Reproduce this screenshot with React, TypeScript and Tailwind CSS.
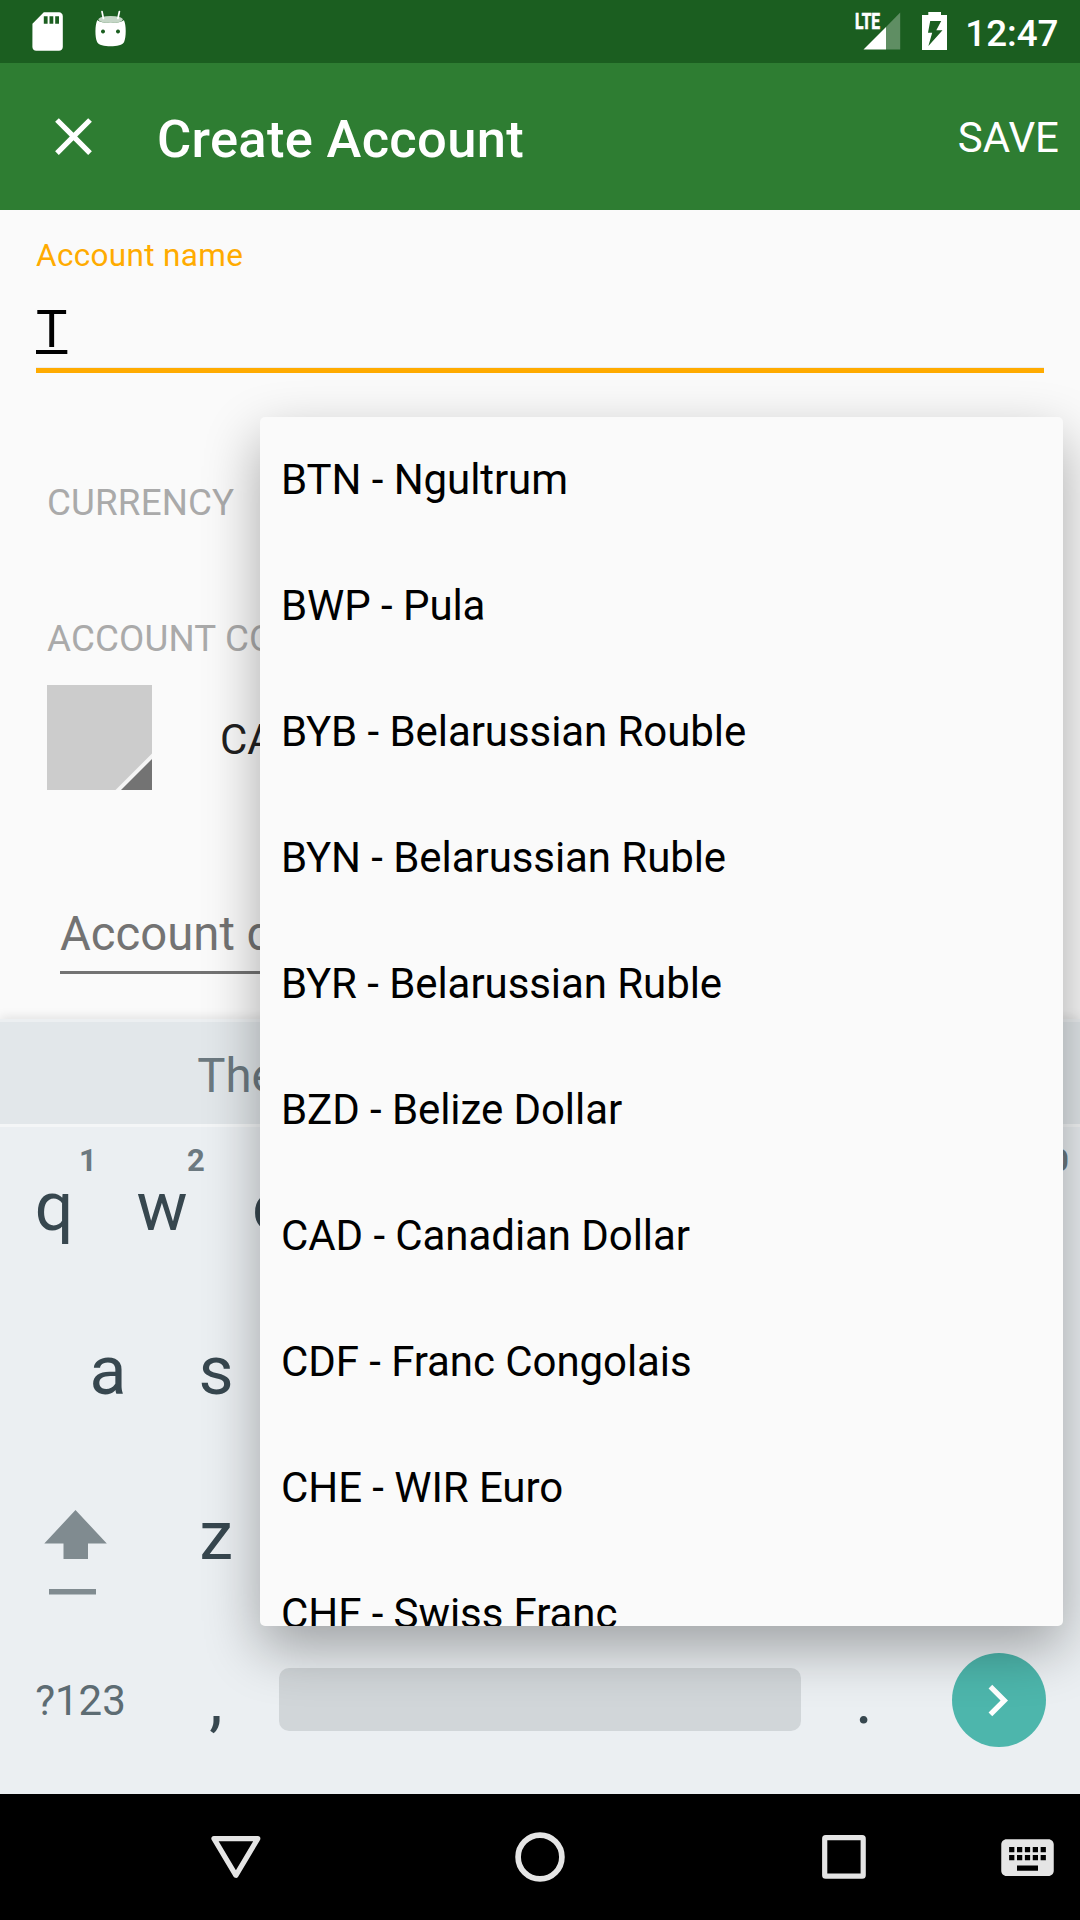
import React from "react";

const currencies = [
  "BTN - Ngultrum",
  "BWP - Pula",
  "BYB - Belarussian Rouble",
  "BYN - Belarussian Ruble",
  "BYR - Belarussian Ruble",
  "BZD - Belize Dollar",
  "CAD - Canadian Dollar",
  "CDF - Franc Congolais",
  "CHE - WIR Euro",
  "CHF - Swiss Franc",
];

const topRow = ["q", "w", "e", "r", "t", "y", "u", "i", "o", "p"];
const homeRow = ["a", "s", "d", "f", "g", "h", "j", "k", "l"];
const bottomRow = ["z", "x", "c", "v", "b", "n", "m"];

function StatusBar() {
  return (
    <div className="flex h-[63px] justify-between bg-[#1b5e20] text-white">
      <svg width="140" height="63" viewBox="0 0 140 63" fill="currentColor">
        <path
          transform="translate(24.8 8.5) scale(1.9 1.92)"
          d="M18 2h-8L4.02 8 4 20c0 1.1.9 2 2 2h12c1.1 0 2-.9 2-2V4c0-1.1-.9-2-2-2zm-6 6h-2V4h2v4zm3 0h-2V4h2v4zm3 0h-2V4h2v4z"
        />
        <path d="M102 11.5l1.4 7M119.4 11.5l-1.5 7" stroke="currentColor" strokeWidth="1.7" strokeLinecap="round" />
        <ellipse cx="110.6" cy="19.5" rx="12.2" ry="3.5" opacity="0.75" />
        <path
          fillRule="evenodd"
          d="M97.3 20c3 4 23.600 4 26.600 0 2.400 5 2.400 17 .2 22-2.500 5.800-24.500 5.800-27 0-2.200-5-2.200-17 .2-22zM103 29.400a2 2 0 1 0 .01 0zM118 29.400a2 2 0 1 0 .01 0z"
        />
      </svg>
      <div className="flex">
        <svg width="110" height="63" viewBox="850 0 110 63" fill="currentColor">
          <text x="855" y="29.300" fontFamily="Roboto" fontWeight="700" fontSize="22.500" stroke="currentColor" strokeWidth="0.7" textLength="25" lengthAdjust="spacingAndGlyphs">
            LTE
          </text>
          <path d="M900.200 12.600V49.500H886V27z" opacity="0.3" />
          <path d="M886 27V49.500H863.500z" />
          <path
            fillRule="evenodd"
            d="M928.300 12h12.700v3h6v35h-25V15h6.300zM930.200 21l-2.200 11.700h4.200L928.400 46l14.100-15.700h-6.200L941.200 21z"
          />
        </svg>
        <span className="mt-[15px] mr-[21.500px] ml-[5px] text-[36.750px] leading-[37px] font-medium">12:47</span>
      </div>
    </div>
  );
}

function AppBar() {
  return (
    <header className="flex h-[147px] items-center bg-[#2e7d32] pr-[21px] pl-[42px] text-white">
      <svg width="63" height="63" viewBox="0 0 24 24" fill="currentColor">
        <path d="M19 6.410L17.590 5 12 10.590 6.410 5 5 6.410 10.590 12 5 17.590 6.410 19 12 13.410 17.590 19 19 17.590 13.410 12z" />
      </svg>
      <h1 className="mt-[4px] ml-[52px] flex-1 text-[52.500px] leading-[60px] font-medium tracking-[0.300px]">Create Account</h1>
      <button className="mt-[2px] text-[42px] leading-[48px]">SAVE</button>
    </header>
  );
}

function AccountForm() {
  return (
    <main className="flex h-[809px] flex-col bg-[#fafafa] px-[36px] pt-[28px] whitespace-nowrap">
      <label className="text-[31.500px] leading-[36px] tracking-[0.330px] text-[#ffab00]">Account name</label>
      <div className="mt-[25px] text-[52.500px] leading-[60px] text-black">
        <span className="underline decoration-[3.500px] underline-offset-[3px]">T</span>
      </div>
      <div className="mt-[8px] h-[6px] border-t border-[#ececec] bg-[#ffab00]" />
      <div className="mt-[108px] ml-[11px] text-[36.750px] leading-[44px] tracking-[0.150px] text-[#aaaaaa]">CURRENCY</div>
      <div className="mt-[92px] ml-[11px] text-[36.750px] leading-[44px] tracking-[0.150px] text-[#aaaaaa]">ACCOUNT COLOR</div>
      <div className="mt-[24px] ml-[11px] flex h-[105px] items-center">
        <svg width="105" height="105" viewBox="0 0 105 105">
          <path fill="#cccccc" d="M0 0h105v105H0z" />
          <path fill="#f5f5f5" d="M105 68.500V105H68.500z" />
          <path fill="#737373" d="M105 74V105H74z" />
        </svg>
        <span className="mt-[4px] ml-[68px] text-[42px] leading-[48px] text-[#212121]">CASH</span>
      </div>
      <div className="mx-[24px] mt-[116px] text-[47.250px] leading-[56px] text-[#737373]">Account description</div>
      <div className="mx-[24px] mt-[9px] h-[3px] shrink-0 bg-[#737373]" />
    </main>
  );
}

function Key({ label }: { label: string }) {
  return <span className="w-[108px] text-center text-[68px] leading-[80px] text-[#37474f]">{label}</span>;
}

function Keyboard() {
  return (
    <section className="flex h-[775px] flex-col bg-[#ebeff2] shadow-[0_-2px_10px_rgba(0,0,0,0.10)]">
      <div className="h-[3px] bg-[#eceff1]" />
      <div className="flex h-[102px] items-center bg-[#e2e7ea] text-[47.250px] leading-[56px] text-[#6c7980]">
        <span className="mt-[5px] w-[474px] text-center">The</span>
      </div>
      <div className="h-[3px] bg-[#f4f6f7]" />
      <div className="flex h-[159px] items-center">
        {topRow.map((letter, i) => (
          <div key={letter} className="relative flex h-full items-center">
            <Key label={letter} />
            <span className="absolute top-[18px] left-[68px] w-[40px] text-center text-[31px] leading-[32px] font-bold text-[#6c7980]">
              {(i + 1) % 10}
            </span>
          </div>
        ))}
      </div>
      <div className="mt-[2px] flex h-[166px] items-center justify-center">
        {homeRow.map((letter) => (
          <Key key={letter} label={letter} />
        ))}
      </div>
      <div className="flex h-[164px] items-center">
        <svg className="shrink-0" width="162" height="164" viewBox="0 0 162 164" fill="#808b90">
          <path d="M75.500 56L106.800 89.500H88V105H63.500V89.500H44.300z" />
          <path d="M49 135h47v5.500H49z" />
        </svg>
        {bottomRow.map((letter) => (
          <Key key={letter} label={letter} />
        ))}
      </div>
      <div className="flex h-[164px] items-center">
        <span className="mt-[2px] w-[162px] pr-[1px] text-center text-[42px] leading-[48px] text-[#5d6c73]">?123</span>
        <Key label="," />
        <div className="mb-[1px] ml-[9px] h-[63px] w-[522px] rounded-[10px] bg-[#d1d6d9]" />
        <span className="ml-[9px] w-[108px] text-center text-[68px] leading-[80px] text-[#37474f]">.</span>
        <div className="ml-[34px] flex h-[94px] w-[94px] items-center justify-center rounded-full bg-[#4db6ac]">
          <svg className="mr-[3px]" width="63" height="63" viewBox="0 0 24 24" fill="white">
            <path d="M10 6L8.590 7.410 13.170 12l-4.580 4.590L10 18l6-6z" />
          </svg>
        </div>
      </div>
    </section>
  );
}

function NavigationBar() {
  return (
    <nav className="flex h-[126px] items-center bg-black text-[#e5e5e5]">
      <svg className="ml-[206px]" width="60" height="60" viewBox="0 0 60 60" fill="none" stroke="currentColor" strokeWidth="5.200" strokeLinejoin="round">
        <path d="M8 11.600H51.800L29.900 48.300z" />
      </svg>
      <svg className="ml-[244px]" width="60" height="60" viewBox="0 0 60 60" fill="none" stroke="currentColor" strokeWidth="5.700">
        <circle cx="30" cy="30" r="21.900" />
      </svg>
      <svg className="ml-[244px]" width="60" height="60" viewBox="0 0 60 60" fill="none" stroke="currentColor" strokeWidth="5.200" strokeLinejoin="round">
        <rect x="10.700" y="10.700" width="38.500" height="38.500" rx="1" />
      </svg>
      <svg className="ml-[122px]" width="63" height="63" viewBox="0 0 24 24" fill="currentColor">
        <path d="M20 5H4c-1.100 0-1.990.9-1.990 2L2 17c0 1.100.9 2 2 2h16c1.100 0 2-.9 2-2V7c0-1.100-.9-2-2-2zm-9 3h2v2h-2V8zm0 3h2v2h-2v-2zM8 8h2v2H8V8zm0 3h2v2H8v-2zm-1 2H5v-2h2v2zm0-3H5V8h2v2zm9 7H8v-2h8v2zm0-4h-2v-2h2v2zm0-3h-2V8h2v2zm3 3h-2v-2h2v2zm0-3h-2V8h2v2z" />
      </svg>
    </nav>
  );
}

function CurrencyMenu() {
  return (
    <ul className="absolute top-[417px] left-[260px] h-[1209px] w-[803px] overflow-hidden rounded-[5px] bg-[#fafafa] shadow-[0_22px_56px_rgba(0,0,0,0.33)]">
      {currencies.map((name) => (
        <li key={name} className="flex h-[126px] items-center px-[21px] text-[42px] leading-[48px] tracking-[-0.070px] text-black">
          {name}
        </li>
      ))}
    </ul>
  );
}

export default function App() {
  return (
    <div className="relative flex h-[1920px] w-[1080px] flex-col overflow-hidden font-['Roboto',sans-serif]">
      <StatusBar />
      <AppBar />
      <AccountForm />
      <Keyboard />
      <NavigationBar />
      <CurrencyMenu />
    </div>
  );
}
